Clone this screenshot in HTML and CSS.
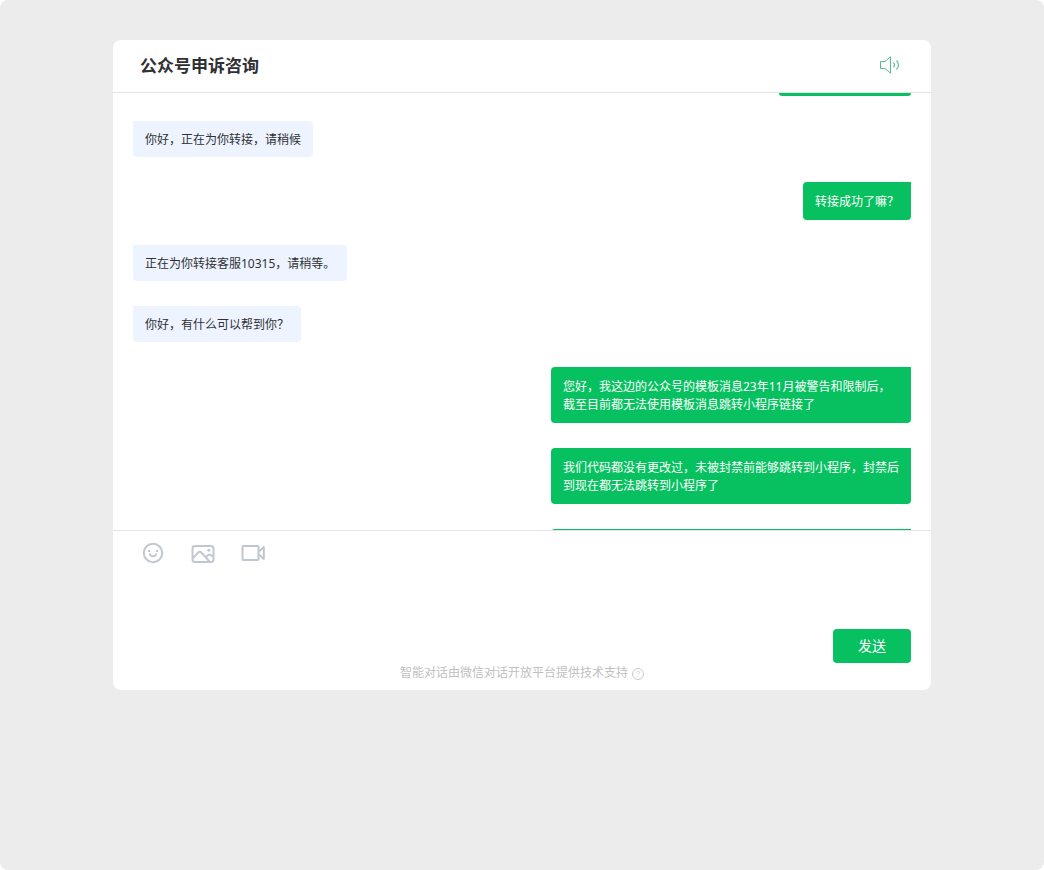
FILE: index.html
```html
<!DOCTYPE html>
<html lang="zh-CN">
<head>
<meta charset="utf-8">
<meta name="viewport" content="width=device-width, initial-scale=1">
<title>公众号申诉咨询</title>
<link rel="stylesheet" href="styles.css">
</head>
<body>
<div class="page">
  <main class="chat">
    <header class="chat-header">
      <h1 class="chat-title">公众号申诉咨询</h1>
      <button class="icon-button" type="button" aria-label="声音">
        <svg class="sound-icon" width="22" height="20" viewBox="0 0 22 20" fill="none">
          <path d="M1.5 6.5H6L11.500 1.800V18.200L6 13.500H1.500Z" stroke="#4fc08a"/>
          <path d="M14.500 7.500Q16.500 10 14.500 12.500" stroke="#5cc49c" stroke-width="1.200"/>
          <path d="M17.500 5.500Q21.500 10 17.500 14.500" stroke="#5cc49c" stroke-width="1.200"/>
        </svg>
      </button>
    </header>

    <section class="messages">
      <div class="bubble sent clipped-top"></div>
      <p class="bubble received">你好，正在为你转接，请稍候</p>
      <p class="bubble sent">转接成功了嘛？</p>
      <p class="bubble received">正在为你转接客服10315，请稍等。</p>
      <p class="bubble received">你好，有什么可以帮到你？</p>
      <p class="bubble sent">您好，我这边的公众号的模板消息23年11月被警告和限制后，截至目前都无法使用模板消息跳转小程序链接了</p>
      <p class="bubble sent">我们代码都没有更改过，未被封禁前能够跳转到小程序，封禁后到现在都无法跳转到小程序了</p>
      <div class="bubble sent clipped-bottom"></div>
    </section>

    <form class="composer">
      <div class="toolbar">
        <button class="icon-button" type="button" aria-label="表情">
          <svg width="24" height="24" viewBox="0 0 24 24" fill="none" stroke="#c1c7d0" stroke-width="2">
            <circle cx="12" cy="12" r="9.200"/>
            <path d="M8.800 12.500C9.200 16.200 14.800 16.200 15.200 12.500"/>
            <path d="M7 10H9M15 10H17"/>
          </svg>
        </button>
        <button class="icon-button" type="button" aria-label="图片">
          <svg width="24" height="24" viewBox="0 0 24 24" fill="none" stroke="#c1c7d0" stroke-width="2">
            <rect x="1.500" y="5" width="21" height="16" rx="2.500"/>
            <path d="M2 17L7.500 11.300Q8.800 10.300 10.200 11.300L18.500 20.500M14.800 16.200L17.200 14Q18.300 13.300 19.300 13.800L22 15.500"/>
            <circle cx="17.800" cy="9.200" r="1.500" fill="#c1c7d0" stroke="none"/>
          </svg>
        </button>
        <button class="icon-button" type="button" aria-label="视频">
          <svg width="26" height="24" viewBox="0 0 26 24" fill="none" stroke="#c1c7d0" stroke-width="2">
            <rect x="1.500" y="5" width="16" height="14" rx="1"/>
            <path d="M18 10.500L22.800 6V18L18 13.500" stroke-linejoin="round"/>
          </svg>
        </button>
      </div>
      <textarea class="message-input" aria-label="输入消息"></textarea>
      <button class="send-button" type="button">发送</button>
      <footer class="credit">
        <span>智能对话由微信对话开放平台提供技术支持</span>
        <svg width="12" height="12" viewBox="0 0 12 12" fill="none" stroke="#c8c8c8">
          <circle cx="6" cy="6" r="5.500"/>
          <path d="M4.300 4.800C4.300 2.600 7.700 2.600 7.700 4.600C7.700 5.900 6 5.900 6 7.300M6 8.300V9.200" stroke-width=".8"/>
        </svg>
      </footer>
    </form>
  </main>
</div>
</body>
</html>
```

FILE: styles.css
```css
* {
  box-sizing: border-box;
}

body {
  margin: 0;
  background: #fff;
  color: #2f3033;
  font-family: "Noto Sans", "Noto Sans CJK SC", sans-serif;
  font-size: 12px;
  line-height: 18px;
}

.page {
  min-height: 100vh;
  padding: 40px 20px;
  border-radius: 8px;
  background: #ececec;
}

.chat {
  max-width: 818px;
  margin: 0 auto;
  border-radius: 8px;
  background: #fff;
  overflow: hidden;
}

.chat-header {
  display: flex;
  align-items: center;
  justify-content: space-between;
  padding: 13px 30px 15px 27px;
  border-bottom: 1px solid #e4e5eb;
}

.chat-title {
  margin: 0;
  font-family: "Noto Sans CJK SC", sans-serif;
  font-size: 17px;
  font-weight: 700;
  line-height: 24px;
}

.icon-button {
  display: flex;
  padding: 0;
  border: 0;
  background: none;
  cursor: pointer;
}

.messages {
  display: flex;
  flex-direction: column;
  align-items: flex-start;
  gap: 25px;
  height: 437px;
  padding: 0 20px;
  overflow: hidden;
}

.bubble {
  flex-shrink: 0;
  max-width: 360px;
  margin: 0;
  padding: 10px 12px 8px;
}

.received {
  border-radius: 0 4px 4px 4px;
  background: #edf4ff;
}

.sent {
  align-self: flex-end;
  padding: 11px 12px 9px;
  border-radius: 4px 0 4px 4px;
  background: #07c160;
  color: #fff;
}

.clipped-top {
  width: 132px;
  height: 3px;
  padding: 0;
  border-radius: 0 0 4px 4px;
}

.clipped-bottom {
  width: 100%;
  height: 38px;
}

.composer {
  display: flex;
  flex-direction: column;
  padding: 10px 20px 8px;
  border-top: 1px solid #e4e5eb;
}

.toolbar {
  display: flex;
  gap: 26px;
  padding: 0 8px;
}

.message-input {
  width: 100%;
  height: 64px;
  padding: 8px;
  border: 0;
  outline: 0;
  resize: none;
  font: inherit;
}

.send-button {
  align-self: flex-end;
  width: 78px;
  height: 34px;
  padding: 0 0 2px;
  border: 0;
  border-radius: 4px;
  background: #07c160;
  color: #fff;
  font-family: "Noto Sans CJK SC", sans-serif;
  font-size: 14px;
  cursor: pointer;
}

.credit {
  display: flex;
  align-items: flex-end;
  justify-content: center;
  gap: 4px;
  padding-top: 1px;
  color: #c0c0c0;
}

.credit svg {
  margin-bottom: 2px;
}
```
